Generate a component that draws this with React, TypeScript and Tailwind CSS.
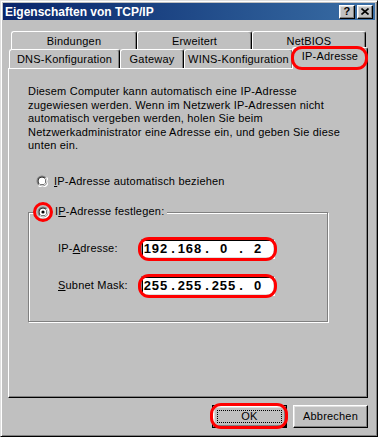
import React from 'react';

const font = { fontFamily: '"Liberation Sans", Arial, sans-serif' };

const raised =
  'border border-t-white border-l-white border-r-black border-b-black shadow-[inset_-1px_-1px_#808080,inset_1px_1px_#dfdfdf]';

function Tab({ label, w, selected = false }: { label: string; w: string; selected?: boolean }) {
  return (
    <div
      className={`${w} ${
        selected ? 'h-[22px] -mb-px -mx-[1px] z-20 pt-[1px]' : 'h-[19px] pt-[2px]'
      } relative flex justify-center bg-[#c0c0c0] border-l border-t border-r border-l-white border-t-white border-r-black rounded-t-[3px] shadow-[inset_-1px_0_#808080] text-[11px] leading-[14px] text-black`}
    >
      {label}
      {selected && (
        <div className="pointer-events-none absolute -left-[2px] -right-[1px] -top-[2px] -bottom-[1px] rounded-[11px] border-[3px] border-[#ff0000]" />
      )}
    </div>
  );
}

function BackTab({ label, w }: { label: string; w: string }) {
  return (
    <div
      className={`${w} h-[18px] pt-[2px] flex justify-center bg-[#c0c0c0] border-l border-t border-r border-l-white border-t-white border-r-black rounded-t-[3px] shadow-[inset_-1px_0_#808080] text-[11px] leading-[14px] text-black`}
    >
      {label}
    </div>
  );
}

function Radio({ checked = false }: { checked?: boolean }) {
  return (
    <svg width="12" height="12" viewBox="0 0 12 12" className="shrink-0">
      <circle cx="6" cy="6" r="5.5" fill="#808080" />
      <path d="M10.5 2.5 A5.5 5.5 0 0 1 2.5 10.5" stroke="#fff" strokeWidth="1.2" fill="none" />
      <circle cx="6" cy="6" r="4.2" fill="#000" />
      <path d="M9.2 3 A4.2 4.2 0 0 1 3 9.2" stroke="#dfdfdf" strokeWidth="1.2" fill="none" />
      <circle cx="6" cy="6" r="3.5" fill="#fff" />
      {checked && <circle cx="6" cy="6" r="1.6" fill="#000" />}
    </svg>
  );
}

function IpField({ parts }: { parts: string[] }) {
  return (
    <div className="relative w-[134px] h-[20px]">
      <div className="w-full h-full bg-white border border-t-[#808080] border-l-[#808080] border-r-white border-b-white shadow-[inset_1px_1px_#000,inset_-1px_-1px_#dfdfdf] flex items-center pl-[1px] text-[13px] font-bold text-black tracking-normal" style={font}>
        {parts.map((p, i) => (
          <React.Fragment key={i}>
            <span className="w-[26px] text-center tracking-[1px]">{p}</span>
            {i < 3 && <span className="w-[8px] text-center">.</span>}
          </React.Fragment>
        ))}
      </div>
      <div className="pointer-events-none absolute -left-[3px] -right-[2px] -top-[2px] -bottom-[2px] rounded-[11px] border-[3px] border-[#ff0000]" />
    </div>
  );
}

export default function App() {
  return (
    <div
      className="w-[378px] h-[437px] bg-[#c0c0c0] border border-t-[#dfdfdf] border-l-[#dfdfdf] border-r-black border-b-black shadow-[inset_1px_1px_#fff,inset_-1px_-1px_#808080] p-[2px] flex flex-col text-[11px] text-black tracking-[0.2px]"
      style={font}
    >
      {/* title bar */}
      <div className="h-[17px] flex items-center justify-between pl-[2px] pr-[2px] bg-gradient-to-r from-[#0a246a] to-[#3a6ea5]">
        <span className="text-white font-bold text-[12px] leading-none tracking-normal">Eigenschaften von TCP/IP</span>
        <div className="flex gap-[2px]">
          <div className={`w-[16px] h-[14px] bg-[#c0c0c0] ${raised} flex items-center justify-center text-[11px] font-bold leading-none`}>
            ?
          </div>
          <div className={`w-[16px] h-[14px] bg-[#c0c0c0] ${raised} flex items-center justify-center`}>
            <svg width="8" height="7" viewBox="0 0 8 7">
              <path d="M0.5 0.5 L7.5 6.5 M7.5 0.5 L0.5 6.5" stroke="#000" strokeWidth="1.6" />
            </svg>
          </div>
        </div>
      </div>

      {/* tabs */}
      <div className="ml-[5px] mt-[11px] flex flex-col">
        <div className="flex pl-[3px]">
          <BackTab label="Bindungen" w="w-[126px]" />
          <BackTab label="Erweitert" w="w-[115px]" />
          <BackTab label="NetBIOS" w="w-[114px]" />
        </div>
        <div className="relative z-10 -mt-[2px] h-[21px] flex items-end pl-[1px]">
          <Tab label="DNS-Konfiguration" w="w-[111px]" />
          <Tab label="Gateway" w="w-[64px]" />
          <Tab label="WINS-Konfiguration" w="w-[109px]" />
          <Tab label="IP-Adresse" w="w-[76px]" selected />
        </div>

        {/* panel */}
        <div className="w-[360px] h-[330px] border border-t-white border-l-white border-r-black border-b-black shadow-[inset_-1px_-1px_#808080] flex flex-col pl-[19px]">
          <p className="mt-[16px] leading-[13.5px]">
            Diesem Computer kann automatisch eine IP-Adresse
            <br />
            zugewiesen werden. Wenn im Netzwerk IP-Adressen nicht
            <br />
            automatisch vergeben werden, holen Sie beim
            <br />
            Netzwerkadministrator eine Adresse ein, und geben Sie diese
            <br />
            unten ein.
          </p>

          <div className="mt-[22px] flex items-center gap-[6px] pl-[8px] h-[13px]">
            <Radio />
            <span>
              <u>I</u>P-Adresse automatisch beziehen
            </span>
          </div>

          {/* group box */}
          <div className="relative mt-[24px] w-[300px] h-[110px] border border-[#808080] shadow-[1px_1px_0_#fff,inset_1px_1px_0_#fff] flex flex-col pt-[26px] pl-[29px] gap-[17px]">
            <div className="absolute left-[6px] -top-[8px] flex items-center gap-[6px] bg-[#c0c0c0] pl-[2px] pr-[3px] h-[14px]">
              <div className="relative">
                <Radio checked />
                <div className="pointer-events-none absolute -left-[4px] -top-[4px] w-[20px] h-[20px] rounded-full border-[3px] border-[#ff0000]" />
              </div>
              <span>
                I<u>P</u>-Adresse festlegen:
              </span>
            </div>

            <div className="flex items-center">
              <span className="w-[83px]">
                IP-<u>A</u>dresse:
              </span>
              <IpField parts={['192', '168', '0', '2']} />
            </div>
            <div className="flex items-center">
              <span className="w-[83px]">
                <u>S</u>ubnet Mask:
              </span>
              <IpField parts={['255', '255', '255', '0']} />
            </div>
          </div>
        </div>

        {/* buttons */}
        <div className="mt-[7px] w-[360px] flex justify-end gap-[6px]">
          <div className="relative w-[75px] h-[23px] border border-black">
            <div className={`w-full h-full bg-[#c0c0c0] ${raised} flex items-center justify-center p-[3px]`}>
              <div className="w-full h-full border border-dotted border-black flex items-center justify-center">
                OK
              </div>
            </div>
            <div className="pointer-events-none absolute -left-[3px] -right-[2px] -top-[3px] -bottom-[2px] rounded-[11px] border-[3px] border-[#ff0000]" />
          </div>
          <div className={`w-[75px] h-[23px] bg-[#c0c0c0] ${raised} flex items-center justify-center`}>
            Abbrechen
          </div>
        </div>
      </div>
    </div>
  );
}
